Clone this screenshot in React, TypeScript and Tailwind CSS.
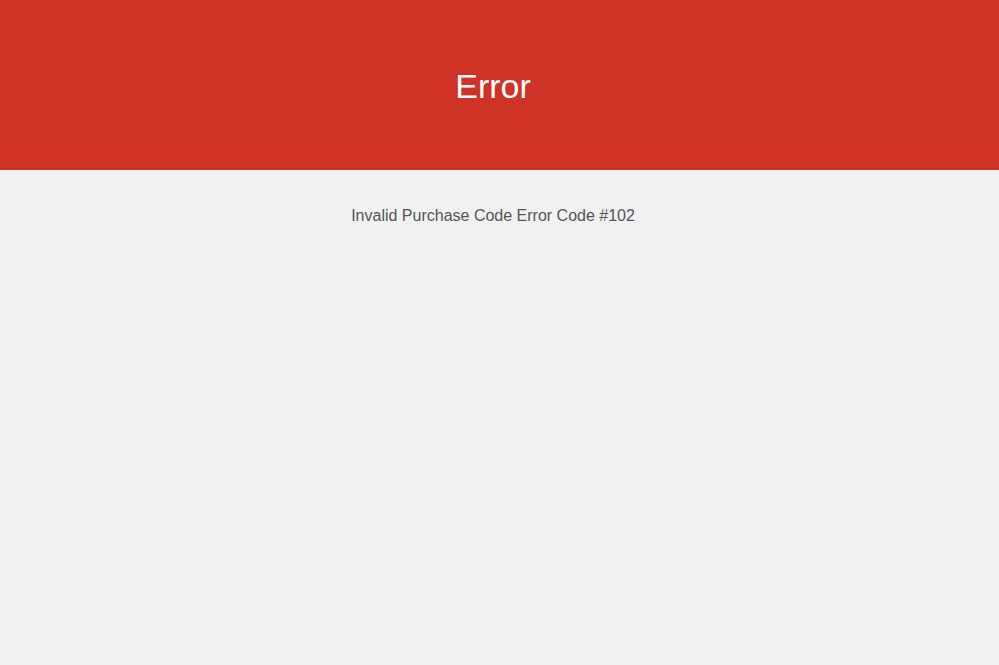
import React from "react";

export default function App() {
  return (
    <div className="min-h-[665px] bg-[#f1f1f1] font-['Liberation_Sans',Arial,sans-serif]">
      <header className="flex h-[170px] items-center justify-center bg-[#cf3325] pr-[13px] pt-[2px]">
        <h1 className="text-[34px] leading-none text-white">Error</h1>
      </header>
      <main className="pr-[13px] pt-[37px] text-center">
        <p className="text-[16px] leading-[18px] text-[#555555]">
          Invalid Purchase Code Error Code #102
        </p>
      </main>
    </div>
  );
}
